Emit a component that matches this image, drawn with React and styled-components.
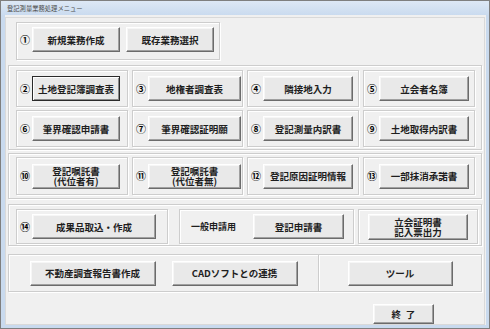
import React from "react";
import styled, { createGlobalStyle } from "styled-components";

const GlobalStyle = createGlobalStyle`
  html, body {
    margin: 0;
    padding: 0;
    background: #ffffff;
  }
  body {
    font-family: "Noto Sans CJK JP", "Noto Sans", sans-serif;
  }
`;

const Window = styled.div`
  width: 490px;
  height: 329px;
  box-sizing: border-box;
  border: 1px solid #7f7f7f;
  background: #c9daee;
  display: flex;
  flex-direction: column;
`;

const TitleBar = styled.div`
  height: 14px;
  padding-left: 6px;
  display: flex;
  align-items: center;
  font-size: 6.3px;
  color: #4d4d4d;
  background: linear-gradient(#dde8f5, #cadbef);
`;

const Client = styled.div`
  margin: 0 3px 3px 4px;
  height: 310px;
  background: #f0f0f0;
  display: flex;
  flex-direction: column;
`;

const Panel = styled.div`
  flex: 1;
  margin: 2px 1px 1px 0;
  border: 1px solid #d9d9d9;
  display: flex;
  flex-direction: column;
`;

const Frame = styled.div`
  box-sizing: border-box;
  border: 1px solid #cdcdcd;
  box-shadow: inset 1px 1px 0 #ffffff, 1px 1px 0 #ffffff;
`;

const TopGroup = styled(Frame)`
  margin: 4px 0 0 10px;
  width: 204px;
  height: 38px;
  display: flex;
  align-items: center;
  padding: 4px 0 7px 0;
`;

const Group = styled(Frame)`
  margin: ${(p) => p.$top}px 0 0 2px;
  width: 474px;
  padding: ${(p) => p.$pad || "0"};
`;

const Grid = styled.div`
  display: grid;
  grid-template-columns: 112px 111px 112px 112px;
  column-gap: 4px;
  row-gap: 3px;
`;

const Cell = styled(Frame)`
  height: ${(p) => p.$h}px;
  display: flex;
  align-items: center;
`;

const Num = styled.span`
  width: 15px;
  flex: none;
  padding-left: 3px;
  box-sizing: border-box;
  font-size: 10px;
  font-weight: 700;
  color: #000;
  line-height: 1;
`;

const Btn = styled.button`
  box-sizing: border-box;
  width: ${(p) => p.$w || 89}px;
  height: ${(p) => p.$h || 25}px;
  margin: ${(p) => p.$m || "0"};
  padding: 0;
  flex: none;
  font-family: "Noto Sans CJK JP", "Noto Sans", sans-serif;
  font-size: 9.5px;
  font-weight: 700;
  line-height: 10px;
  color: #1e1e1e;
  background: #e9e9e9;
  border: 1px solid;
  border-color: ${(p) =>
    p.$default ? "#2a2a2a" : "#ffffff #6b6b6b #6b6b6b #ffffff"};
  box-shadow: ${(p) =>
    p.$default
      ? "inset 1px 1px 0 #ffffff, inset -1px -1px 0 #8a8a8a"
      : "inset -1px -1px 0 #a0a0a0, inset 1px 1px 0 #f6f6f6"};
  white-space: pre-line;
`;

const Row = styled.div`
  display: flex;
  align-items: stretch;
  height: ${(p) => (p.$h ? `${p.$h}px` : "auto")};
`;

const SubFrame = styled(Frame)`
  width: ${(p) => p.$w}px;
  height: 35px;
  margin-left: ${(p) => p.$ml || 0}px;
  display: flex;
  align-items: center;
  justify-content: ${(p) => p.$justify || "flex-start"};
  padding: ${(p) => p.$pad || "0"};
`;

const Label = styled.span`
  font-size: 9px;
  font-weight: 700;
  color: #1e1e1e;
`;

const Section = styled.div`
  display: flex;
  align-items: center;
  justify-content: center;
  gap: 16px;
  flex: ${(p) => (p.$grow ? 1 : "none")};
  width: ${(p) => (p.$w ? `${p.$w}px` : "auto")};
  border-left: ${(p) => (p.$divider ? "1px solid #cdcdcd" : "none")};
  box-shadow: ${(p) => (p.$divider ? "inset 1px 0 0 #ffffff" : "none")};
`;

const ExitRow = styled.div`
  margin-top: 7px;
  padding-left: 367px;
`;

const grid2 = [
  ["②", "土地登記簿調査表", 88, true],
  ["③", "地権者調査表", 93],
  ["④", "隣接地入力", 90],
  ["⑤", "立会者名簿", 90],
  ["⑥", "筆界確認申請書", 88],
  ["⑦", "筆界確認証明願", 93],
  ["⑧", "登記測量内訳書", 90],
  ["⑨", "土地取得内訳書", 90],
];

const grid3 = [
  ["⑩", "登記嘱託書\n(代位者有)", 88],
  ["⑪", "登記嘱託書\n(代位者無)", 93],
  ["⑫", "登記原因証明情報", 90],
  ["⑬", "一部抹消承諾書", 90],
];

export default function App() {
  return (
    <>
      <GlobalStyle />
      <Window>
        <TitleBar>登記測量業務処理メニュー</TitleBar>
        <Client>
          <Panel>
            <TopGroup>
              <Num>①</Num>
              <Btn $w={88}>新規業務作成</Btn>
              <Btn $w={88} $m="0 0 0 6px">既存業務選択</Btn>
            </TopGroup>

            <Group $top={5} $pad="4px 0 2px 7px">
              <Grid>
                {grid2.map(([n, t, w, d]) => (
                  <Cell key={n} $h={37}>
                    <Num>{n}</Num>
                    <Btn $w={w} $default={d}>{t}</Btn>
                  </Cell>
                ))}
              </Grid>
            </Group>

            <Group $top={3} $pad="3px 0 3px 7px">
              <Grid>
                {grid3.map(([n, t, w]) => (
                  <Cell key={n} $h={38}>
                    <Num>{n}</Num>
                    <Btn $w={w}>{t}</Btn>
                  </Cell>
                ))}
              </Grid>
            </Group>

            <Group $top={5} $pad="4px 0 1px 7px">
              <Row>
                <SubFrame $w={152}>
                  <Num>⑭</Num>
                  <Btn $w={124}>成果品取込・作成</Btn>
                </SubFrame>
                <SubFrame $w={175} $ml={11} $justify="space-between" $pad="0 9px 0 11px">
                  <Label>一般申請用</Label>
                  <Btn $w={91}>登記申請書</Btn>
                </SubFrame>
                <SubFrame $w={120} $ml={4} $justify="center">
                  <Btn $w={100} $h={26}>{"立会証明書\n記入票出力"}</Btn>
                </SubFrame>
              </Row>
            </Group>

            <Group $top={8} $pad="0">
              <Row $h={36}>
                <Section $grow>
                  <Btn $w={126}>不動産調査報告書作成</Btn>
                  <Btn $w={126}>CADソフトとの連携</Btn>
                </Section>
                <Section $w={162} $divider>
                  <Btn $w={105}>ツール</Btn>
                </Section>
              </Row>
            </Group>

            <ExitRow>
              <Btn $w={61} $h={20}>{"終\u2002了"}</Btn>
            </ExitRow>
          </Panel>
        </Client>
      </Window>
    </>
  );
}
